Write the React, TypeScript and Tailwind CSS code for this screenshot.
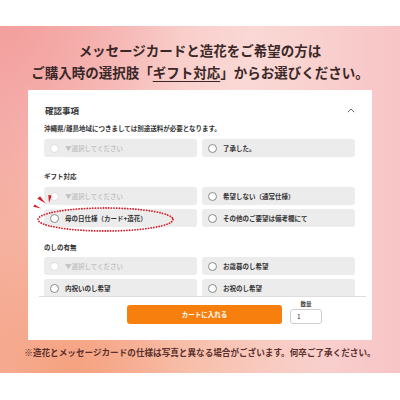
import React from "react";

const JP = "font-['Noto_Sans_CJK_JP','Noto_Sans',sans-serif]";

function Opt({ label, disabled }: { label: string; disabled?: boolean }) {
  return (
    <div className="flex h-[18px] w-[153px] items-center rounded-[3px] bg-[#ececec] pl-[6px]">
      <span
        className={`h-[9px] w-[9px] shrink-0 rounded-full border bg-white ${
          disabled ? "border-[#dddddd] bg-[#f3f3f3]" : "border-[#8a8a8a]"
        }`}
      />
      <span
        className={`ml-[6px] whitespace-nowrap text-[6.5px] font-bold leading-none ${
          disabled ? "text-[#c4c4c4]" : "text-[#333333]"
        }`}
      >
        {label}
      </span>
    </div>
  );
}

function Row({ a, b, aDisabled }: { a: string; b: string; aDisabled?: boolean }) {
  return (
    <div className="flex gap-[5px]">
      <Opt label={a} disabled={aDisabled} />
      <Opt label={b} />
    </div>
  );
}

function Label({ children }: { children: React.ReactNode }) {
  return (
    <div className="flex h-[10px] items-center text-[6.5px] font-bold leading-none text-[#333333]">
      {children}
    </div>
  );
}

export default function App() {
  return (
    <div className={`h-[400px] w-[400px] bg-white ${JP}`}>
      <div className="h-[26px]" />
      <div className="flex h-[347px] flex-col items-center bg-[radial-gradient(ellipse_at_18%_100%,#f5a27f_0%,rgba(245,162,127,0)_55%),radial-gradient(ellipse_at_0%_0%,#f39f9d_0%,rgba(243,159,157,0)_45%),linear-gradient(90deg,#f6bcb8_0%,#fbe0dc_45%,#f9d3d0_75%,#f8c4c6_100%)] pt-[13px]">
        <div className="text-center text-[13.5px] font-bold leading-[22px] text-[#3a2828]">
          <div>メッセージカードと造花をご希望の方は</div>
          <div>
            ご購入時の選択肢「
            <span className="underline decoration-[#3a2828] decoration-1 underline-offset-[3px]">
              ギフト対応
            </span>
            」からお選びください。
          </div>
        </div>

        <div className="relative mt-[7px] flex h-[250px] w-[344px] flex-col bg-white">
          <div className="h-[206px] overflow-hidden px-[16px] pt-[13px]">
            <div className="flex h-[14px] items-center justify-between">
              <span className="ml-[1px] text-[8.5px] font-bold text-[#333333]">確認事項</span>
              <svg width="8" height="5" viewBox="0 0 8 5" className="mr-[1px]">
                <path d="M0.8 4.2 L4 1 L7.2 4.2" fill="none" stroke="#666" strokeWidth="1" />
              </svg>
            </div>
            <div className="mt-[6px]">
              <Label>沖縄県/離島地域につきましては別途送料が必要となります。</Label>
            </div>
            <div className="mt-[6px]">
              <Row a="▼選択してください" b="了承した。" aDisabled />
            </div>
            <div className="mt-[14px]">
              <Label>ギフト対応</Label>
            </div>
            <div className="mt-[6px] flex flex-col gap-[4px]">
              <Row a="▼選択してください" b="希望しない（通常仕様）" aDisabled />
              <Row a="母の日仕様（カード+造花）" b="その他のご要望は備考欄にて" />
            </div>
            <div className="mt-[15px]">
              <Label>のしの有無</Label>
            </div>
            <div className="mt-[5px] flex flex-col gap-[4px]">
              <Row a="▼選択してください" b="お歳暮のし希望" aDisabled />
              <Row a="内祝いのし希望" b="お祝のし希望" />
            </div>
          </div>
          <div className="ml-[11px] mr-[6px] h-px bg-[#dedede]" />
          <div className="flex items-end gap-[8px] pl-[99px] pt-[4px]">
            <div className="flex h-[19px] w-[155px] items-center justify-center rounded-[3px] bg-[#f77f0e] text-[6.5px] font-bold text-white">
              カートに入れる
            </div>
            <div className="flex w-[32px] flex-col items-center">
              <div className="text-[5.5px] font-bold leading-[7px] text-[#444444]">数量</div>
              <div className="mt-[1px] flex h-[15px] w-[32px] items-center rounded-[3px] border border-[#cfcfcf] bg-white pl-[6px] text-[6.5px] text-[#333333]">
                1
              </div>
            </div>
          </div>

          <svg
            className="pointer-events-none absolute left-0 top-0"
            width="344"
            height="250"
            viewBox="0 0 344 250"
          >
            <ellipse
              cx="77.5"
              cy="129.5"
              rx="67.5"
              ry="11.5"
              fill="none"
              stroke="#d41f2b"
              strokeWidth="1.8"
              strokeDasharray="0.1 2.6"
              strokeLinecap="round"
            />
            <polygon points="20.3,105 23.7,105.4 21,113" fill="#d41f2b" />
            <polygon points="9.3,108.6 12.1,106.3 17.5,113.5" fill="#d41f2b" />
            <polygon points="5.3,116.8 6.6,114.4 13,118.5" fill="#d41f2b" />
          </svg>
        </div>

        <div className="mt-[5px] whitespace-nowrap text-center text-[8.6px] font-bold leading-[14px] text-[#5a2f2c]">
          ※造花とメッセージカードの仕様は写真と異なる場合がございます。何卒ご了承ください。
        </div>
      </div>
    </div>
  );
}
